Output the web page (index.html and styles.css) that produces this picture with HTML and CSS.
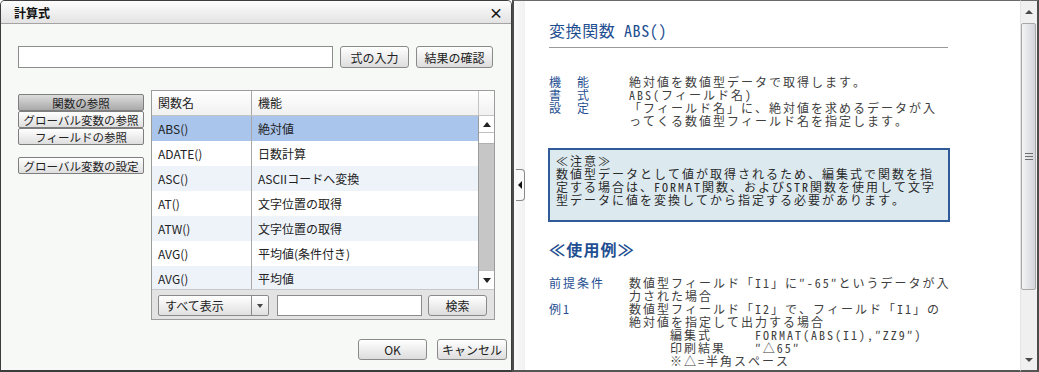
FILE: index.html
```html
<!DOCTYPE html>
<html lang="ja">
<head>
<meta charset="utf-8">
<title>計算式</title>
<link rel="stylesheet" href="styles.css">
</head>
<body>
<div class="app">
  <section class="dialog">
    <header class="titlebar">
      <span class="title">計算式</span>
      <span class="close">×</span>
    </header>
    <div class="dbody">
      <div class="formula-row">
        <input class="formula" type="text">
        <button class="btn b-input">式の入力</button>
        <button class="btn b-check">結果の確認</button>
      </div>
      <div class="main-row">
        <div class="side">
          <button class="sbtn active">関数の参照</button>
          <button class="sbtn">グローバル変数の参照</button>
          <button class="sbtn">フィールドの参照</button>
          <button class="sbtn gap">グローバル変数の設定</button>
        </div>
        <div class="grid">
          <div class="ghead">
            <div class="c1">関数名</div>
            <div class="c2">機能</div>
            <div class="c3"></div>
          </div>
          <div class="gbody">
            <div class="rows">
              <div class="row sel"><div class="c1">ABS()</div><div class="c2">絶対値</div></div>
              <div class="row"><div class="c1">ADATE()</div><div class="c2">日数計算</div></div>
              <div class="row alt"><div class="c1">ASC()</div><div class="c2">ASCIIコードへ変換</div></div>
              <div class="row"><div class="c1">AT()</div><div class="c2">文字位置の取得</div></div>
              <div class="row alt"><div class="c1">ATW()</div><div class="c2">文字位置の取得</div></div>
              <div class="row"><div class="c1">AVG()</div><div class="c2">平均値(条件付き)</div></div>
              <div class="row alt"><div class="c1">AVG()</div><div class="c2">平均値</div></div>
            </div>
            <div class="vscroll">
              <div class="vbtn"><span class="tri-up"></span></div>
              <div class="vthumb"></div>
              <div class="vtrack"></div>
              <div class="vbtn down"><span class="tri-down"></span></div>
            </div>
          </div>
          <div class="gtool">
            <div class="select"><span class="sel-text">すべて表示</span><span class="sel-arrow"><span class="tri-down dark"></span></span></div>
            <input class="search" type="text">
            <button class="btn b-search">検索</button>
          </div>
        </div>
      </div>
      <div class="footer">
        <button class="btn b-ok">OK</button>
        <button class="btn b-cancel">キャンセル</button>
      </div>
    </div>
  </section>

  <div class="splitter">
    <div class="handle"><span class="tri-left"></span></div>
  </div>

  <section class="doc">
    <h1 class="doc-title">変換関数 ABS()</h1>
    <div class="deflist top">
      <div class="lbl">機　能</div><div class="txt">絶対値を数値型データで取得します。</div>
      <div class="lbl">書　式</div><div class="txt">ABS(フィールド名)</div>
      <div class="lbl">設　定</div><div class="txt">「フィールド名」に、絶対値を求めるデータが入<br>ってくる数値型フィールド名を指定します。</div>
    </div>
    <div class="note">
      ≪注意≫<br>
      数値型データとして値が取得されるため、編集式で関数を指<br>
      定する場合は、FORMAT関数、およびSTR関数を使用して文字<br>
      型データに値を変換してから指定する必要があります。
    </div>
    <h2 class="doc-sub">≪使用例≫</h2>
    <div class="deflist ex">
      <div class="lbl">前提条件</div><div class="txt">数値型フィールド「I1」に″-65″というデータが入<br>力された場合</div>
      <div class="lbl">例1</div>
      <div class="txt">数値型フィールド「I2」で、フィールド「I1」の<br>絶対値を指定して出力する場合
        <div class="sub">
          <div class="sk">編集式</div><div class="sv">FORMAT(ABS(I1),″ZZ9″)</div>
          <div class="sk">印刷結果</div><div class="sv">″△65″</div>
          <div class="sk">※△=半角スペース</div><div class="sv"></div>
        </div>
      </div>
    </div>
  </section>

  <div class="pscroll">
    <div class="pbtn"><span class="ptri-up"></span></div>
    <div class="pthumb"><span class="grip"></span></div>
    <div class="ptrack"></div>
    <div class="pbtn bottom"><span class="ptri-down"></span></div>
  </div>
</div>
</body>
</html>
```

FILE: styles.css
```css
* { box-sizing: border-box; }
html, body { margin: 0; padding: 0; }
body {
  width: 1039px;
  height: 372px;
  overflow: hidden;
  background: #fff;
  font-family: "Noto Sans CJK JP", "Noto Sans", sans-serif;
  font-size: 12px;
  color: #222;
}
.app { display: flex; height: 372px; }

/* ---------- dialog ---------- */
.dialog {
  width: 512px;
  flex: none;
  height: 372px;
  border: 1px solid #3c3c3c;
  border-bottom-width: 2px;
  border-radius: 5px 5px 0 0;
  background: #f7f9f7;
  display: flex;
  flex-direction: column;
  overflow: hidden;
}
.titlebar {
  height: 23px;
  flex: none;
  display: flex;
  align-items: center;
  justify-content: space-between;
  padding: 0 8px 0 13px;
  background: linear-gradient(#fdfdfd, #e3e3e3);
  border-bottom: 1px solid #a4a4a4;
}
.title { font-weight: bold; font-size: 12px; color: #111; }
.close { font-weight: bold; font-size: 14px; color: #111; line-height: 14px; }

.dbody { padding: 22px 0 0 17px; }
.formula-row { display: flex; gap: 7px; height: 22px; }
.formula {
  width: 315px; height: 22px; margin: 0; padding: 0;
  border: 1px solid #8c8c8c; background: #fff;
}
.btn {
  height: 22px; margin: 0; padding: 0;
  border: 1px solid #8a8a8a; border-radius: 3px;
  background: linear-gradient(#ffffff, #dddddd);
  font: 12px "Noto Sans CJK JP", sans-serif;
  line-height: 19px;
  color: #222;
}
.b-input { width: 69px; }
.b-check { width: 77px; }

.main-row { display: flex; gap: 7px; margin-top: 22px; }
.side { width: 126px; flex: none; padding-top: 4px; display: flex; flex-direction: column; }
.sbtn {
  height: 17px; margin: 0; padding: 0;
  border: 1px solid #7e7e7e; border-radius: 2px;
  background: linear-gradient(#ffffff, #dedede);
  font: 11.5px "Noto Sans CJK JP", sans-serif;
  line-height: 14px;
  color: #222;
}
.sbtn.active { background: linear-gradient(#dcdcdc, #a9a9a9); }
.sbtn.gap { margin-top: 12px; }

.grid {
  width: 344px; height: 230px;
  border: 1px solid #9c9c9c;
  display: flex; flex-direction: column;
  background: #fff;
}
.ghead {
  height: 25px; flex: none; display: flex;
  background: linear-gradient(#ffffff, #f1f1f1);
  border-bottom: 1px solid #c4c4c4;
}
.c1 { width: 100px; flex: none; padding-left: 6px; border-right: 1px solid #a8a8a8; }
.c2 { flex: 1; padding-left: 6px; }
.c3 { width: 16px; flex: none; border-left: 1px solid #c4c4c4; }
.ghead > div { line-height: 24px; }

.gbody { height: 173px; flex: none; display: flex; overflow: hidden; }
.rows { flex: 1; overflow: hidden; }
.row { height: 25px; display: flex; line-height: 25px; background: #fff; }
.row.alt { background: #eef3fa; }
.row.sel { background: #a9c5ec; }

.vscroll {
  width: 16px; flex: none; display: flex; flex-direction: column;
  background: #c6c6c6; border-left: 1px solid #9a9a9a;
}
.vbtn {
  height: 17px; flex: none; background: #fff;
  border-bottom: 1px solid #c0c0c0;
  display: flex; align-items: center; justify-content: center;
}
.vbtn.down { height: 19px; border-bottom: 0; border-top: 1px solid #c0c0c0; }
.vthumb { height: 11px; flex: none; background: #fff; border-bottom: 1px solid #b0b0b0; }
.vtrack { flex: 1; }

.tri-up { width: 0; height: 0; border-left: 4px solid transparent; border-right: 4px solid transparent; border-bottom: 5px solid #222; }
.tri-down { width: 0; height: 0; border-left: 4px solid transparent; border-right: 4px solid transparent; border-top: 5px solid #222; }
.tri-down.dark { border-top-color: #444; border-left-width: 3px; border-right-width: 3px; border-top-width: 4px; }

.gtool {
  flex: 1; display: flex; align-items: flex-start; gap: 0;
  padding: 5px 0 0 6px;
  background: #e3e3e3;
  border-top: 1px solid #c8c8c8;
}
.select {
  width: 111px; height: 21px; display: flex;
  border: 1px solid #8a8a8a; border-radius: 2px;
  background: linear-gradient(#ffffff, #e0e0e0);
}
.sel-text { flex: 1; padding-left: 6px; line-height: 19px; }
.sel-arrow {
  width: 17px; border-left: 1px solid #8a8a8a;
  display: flex; align-items: center; justify-content: center;
}
.search {
  width: 145px; height: 21px; margin: 0 0 0 8px; padding: 0;
  border: 1px solid #8c8c8c; background: #fff;
}
.b-search { width: 59px; height: 21px; margin-left: 6px; line-height: 18px; }

.footer {
  display: flex; justify-content: flex-end; gap: 10px;
  margin-top: 19px; padding-right: 4px;
}
.b-ok { width: 69px; height: 21px; }
.b-cancel { width: 70px; height: 21px; }

/* ---------- splitter ---------- */
.splitter {
  width: 13px; flex: none; position: relative;
  border-left: 2px solid #4c4c4c;
  border-top: 1px solid #6a6a6a;
  border-bottom: 2px solid #555;
  background: linear-gradient(90deg, #fafafa, #f1f1f1);
}
.handle {
  position: absolute; left: 2px; top: 168px;
  width: 9px; height: 32px;
  border: 1px solid #8a8a8a; border-left: 0;
  border-radius: 0 4px 4px 0;
  background: #fafafa;
  display: flex; align-items: center; justify-content: center;
}
.tri-left { width: 0; height: 0; border-top: 4px solid transparent; border-bottom: 4px solid transparent; border-right: 4px solid #111; }

/* ---------- document ---------- */
.doc {
  flex: 1; height: 372px; overflow: hidden;
  border-top: 1px solid #6a6a6a;
  border-bottom: 2px solid #555;
  padding: 19px 0 0 24px;
  font-family: "Noto Sans Mono CJK JP", "Liberation Mono", "Noto Sans CJK JP", monospace;
  font-size: 12px;
  line-height: 13px;
  letter-spacing: 2px;
  color: #3e3e3e;
}
.doc-title {
  width: 399px; margin: 0;
  font-size: 16px; font-weight: normal; line-height: 20px;
  letter-spacing: 0.6px;
  color: #1f4f92;
  padding-bottom: 7px;
  border-bottom: 1px solid #9a9a9a;
}
.deflist { display: grid; grid-template-columns: 80px 319px; white-space: nowrap; }
.deflist.top { margin-top: 27px; }
.lbl { color: #1f4f92; }
.note {
  width: 402px; margin: 21px 0 0 -1px;
  border: 2px solid #2f5b98;
  background: #dce9ef;
  padding: 4px 0 14px 6px;
  color: #2a2a2a;
  white-space: nowrap;
}
.doc-sub {
  margin: 17px 0 0 0;
  font-size: 16px; font-weight: bold; line-height: 20px;
  letter-spacing: 1.2px;
  color: #1f4f92;
}
.deflist.ex { margin-top: 17px; }
.sub { display: grid; grid-template-columns: 85px 1fr; padding-left: 41px; }

/* ---------- page scrollbar ---------- */
.pscroll {
  width: 19px; flex: none; height: 372px;
  display: flex; flex-direction: column;
  background: #f0f0f0;
  border-top: 1px solid #6a6a6a;
  border-right: 2px solid #4c4c4c;
  border-bottom: 2px solid #555;
  border-left: 1px solid #e4e4e4;
}
.pbtn {
  height: 22px; flex: none;
  display: flex; align-items: center; justify-content: center;
}
.pbtn.bottom { height: 20px; }
.ptri-up { width: 0; height: 0; border-left: 4px solid transparent; border-right: 4px solid transparent; border-bottom: 4px solid #4a4a4a; }
.ptri-down { width: 0; height: 0; border-left: 4px solid transparent; border-right: 4px solid transparent; border-top: 4px solid #4a4a4a; }
.pthumb {
  height: 267px; flex: none; margin-right: 1px;
  border: 1px solid #a8a8a8; border-radius: 2px;
  background: linear-gradient(90deg, #f4f4f6, #d3d4da);
  display: flex; align-items: center; justify-content: center;
}
.grip {
  width: 8px; height: 7px;
  background: repeating-linear-gradient(#6e6e6e 0 1px, transparent 1px 3px);
}
.ptrack { flex: 1; }
```
